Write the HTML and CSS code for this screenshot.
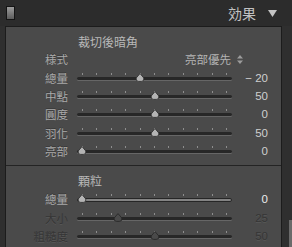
FILE: index.html
```html
<!DOCTYPE html>
<html lang="zh-Hant">
<head>
<meta charset="utf-8">
<title>効果</title>
<link rel="stylesheet" href="styles.css">
</head>
<body>
<div class="app">
  <header class="hdr">
    <span class="hdr-icon"></span>
    <span class="hdr-title">効果</span>
    <svg class="hdr-tri" width="9" height="7" viewBox="0 0 9 7"><path d="M0 0 H9 L4.5 7 Z"/></svg>
  </header>
  <div class="main">
    <div class="panel">
      <section class="sec sec-first">
        <div class="sec-title">裁切後暗角</div>
        <div class="row">
          <span class="lbl">様式</span>
          <span class="select">亮部優先<svg class="updown" width="6" height="9" viewBox="0 0 6 9"><path d="M3 0 L6 3.5 H0 Z M0 5.5 H6 L3 9 Z"/></svg></span>
        </div>
        <div class="row">
          <span class="lbl">總量</span>
          <div class="slider"><div class="ticks"><i></i><i></i><i></i><i></i><i></i><i></i><i></i><i></i><i></i><i></i><i></i></div><div class="track"></div><svg class="thumb" style="--p:40" width="10" height="9" viewBox="0 0 10 9"><path d="M5 0.6 L8.8 5 Q9.4 8.4 6.4 8.4 H3.6 Q0.6 8.4 1.2 5 Z"/></svg></div>
          <span class="val">− 20</span>
        </div>
        <div class="row">
          <span class="lbl">中點</span>
          <div class="slider"><div class="ticks"><i></i><i></i><i></i><i></i><i></i><i></i><i></i><i></i><i></i><i></i><i></i></div><div class="track"></div><svg class="thumb" style="--p:50" width="10" height="9" viewBox="0 0 10 9"><path d="M5 0.6 L8.8 5 Q9.4 8.4 6.4 8.4 H3.6 Q0.6 8.4 1.2 5 Z"/></svg></div>
          <span class="val">50</span>
        </div>
        <div class="row">
          <span class="lbl">圓度</span>
          <div class="slider"><div class="ticks"><i></i><i></i><i></i><i></i><i></i><i></i><i></i><i></i><i></i><i></i><i></i></div><div class="track"></div><svg class="thumb" style="--p:50" width="10" height="9" viewBox="0 0 10 9"><path d="M5 0.6 L8.8 5 Q9.4 8.4 6.4 8.4 H3.6 Q0.6 8.4 1.2 5 Z"/></svg></div>
          <span class="val">0</span>
        </div>
        <div class="row">
          <span class="lbl">羽化</span>
          <div class="slider"><div class="ticks"><i></i><i></i><i></i><i></i><i></i><i></i><i></i><i></i><i></i><i></i><i></i></div><div class="track"></div><svg class="thumb" style="--p:50" width="10" height="9" viewBox="0 0 10 9"><path d="M5 0.6 L8.8 5 Q9.4 8.4 6.4 8.4 H3.6 Q0.6 8.4 1.2 5 Z"/></svg></div>
          <span class="val">50</span>
        </div>
        <div class="row">
          <span class="lbl">亮部</span>
          <div class="slider"><div class="ticks"><i></i><i></i><i></i><i></i><i></i><i></i><i></i><i></i><i></i><i></i><i></i></div><div class="track"></div><svg class="thumb" style="--p:0" width="10" height="9" viewBox="0 0 10 9"><path d="M5 0.6 L8.8 5 Q9.4 8.4 6.4 8.4 H3.6 Q0.6 8.4 1.2 5 Z"/></svg></div>
          <span class="val">0</span>
        </div>
      </section>
      <section class="sec sec-second">
        <div class="sec-title">顆粒</div>
        <div class="row">
          <span class="lbl">總量</span>
          <div class="slider"><div class="ticks"><i></i><i></i><i></i><i></i><i></i><i></i><i></i><i></i><i></i><i></i><i></i></div><div class="track track-active"></div><svg class="thumb" style="--p:0" width="10" height="9" viewBox="0 0 10 9"><path d="M5 0.6 L8.8 5 Q9.4 8.4 6.4 8.4 H3.6 Q0.6 8.4 1.2 5 Z"/></svg></div>
          <span class="val val-bright">0</span>
        </div>
        <div class="row row-off">
          <span class="lbl">大小</span>
          <div class="slider"><div class="ticks"><i></i><i></i><i></i><i></i><i></i><i></i><i></i><i></i><i></i><i></i><i></i></div><div class="track"></div><svg class="thumb" style="--p:25" width="10" height="9" viewBox="0 0 10 9"><path d="M5 0.6 L8.8 5 Q9.4 8.4 6.4 8.4 H3.6 Q0.6 8.4 1.2 5 Z"/></svg></div>
          <span class="val">25</span>
        </div>
        <div class="row row-off">
          <span class="lbl">粗糙度</span>
          <div class="slider"><div class="ticks"><i></i><i></i><i></i><i></i><i></i><i></i><i></i><i></i><i></i><i></i><i></i></div><div class="track"></div><svg class="thumb" style="--p:50" width="10" height="9" viewBox="0 0 10 9"><path d="M5 0.6 L8.8 5 Q9.4 8.4 6.4 8.4 H3.6 Q0.6 8.4 1.2 5 Z"/></svg></div>
          <span class="val">50</span>
        </div>
      </section>
    </div>
    <div class="scroll"><div class="scroll-thumb"></div></div>
  </div>
</div>
</body>
</html>
```
FILE: styles.css
```css
html, body {
  margin: 0;
  padding: 0;
}
body {
  width: 292px;
  height: 247px;
  overflow: hidden;
  background: #2f2f2f;
  font-family: "Noto Sans CJK TC", "Noto Sans CJK JP", sans-serif;
}
.app {
  width: 292px;
  height: 247px;
  display: flex;
  flex-direction: column;
}
.hdr {
  height: 26px;
  flex: none;
  display: flex;
  align-items: center;
  padding: 0 15px 0 6px;
  background: #2c2c2c;
}
.hdr-icon {
  width: 9px;
  height: 14px;
  box-sizing: border-box;
  border: 1px solid #141414;
  background: linear-gradient(#9c9c9c, #5c5c5c);
}
.hdr-title {
  margin-left: auto;
  font-size: 14px;
  line-height: 16px;
  color: #c2c2c2;
}
.hdr-tri {
  margin-left: 12px;
  fill: #c4c4c4;
}
.main {
  flex: 1;
  display: flex;
}
.panel {
  margin-left: 5px;
  width: 277px;
  box-sizing: border-box;
  border: 1px solid #1c1c1c;
  border-bottom: none;
  background: #4a4a4a;
}
.scroll {
  flex: 1;
  display: flex;
  flex-direction: column;
  justify-content: flex-end;
}
.scroll-thumb {
  margin-left: 7px;
  width: 3px;
  height: 27px;
  background: #6a6a6a;
}
.sec-first {
  padding-bottom: 4.6px;
  border-bottom: 1px solid #242424;
}
.sec-title {
  padding: 9px 0 2px 72px;
  font-size: 12px;
  line-height: 12px;
  color: #b9b9b9;
}
.sec-second .sec-title {
  padding-bottom: 3px;
}
.row {
  height: 18.4px;
  display: flex;
  align-items: center;
}
.lbl {
  width: 62px;
  flex: none;
  text-align: right;
  font-size: 11.5px;
  line-height: 12px;
  color: #a9a9a9;
  text-shadow: 0 -1px 0 rgba(0, 0, 0, 0.25);
}
.select {
  margin-left: 117px;
  display: flex;
  align-items: center;
  font-size: 11.5px;
  line-height: 12px;
  color: #b4b4b4;
}
.updown {
  margin-left: 6px;
  fill: #9c9c9c;
}
.slider {
  position: relative;
  margin-left: 9px;
  width: 155px;
  height: 12px;
  flex: none;
}
.ticks {
  display: flex;
  justify-content: space-between;
  padding: 0 5px;
  margin-top: 1px;
  height: 2px;
}
.ticks i {
  width: 1px;
  height: 2px;
  background: #8e8e8e;
}
.track {
  margin-top: 2px;
  height: 3px;
  border-radius: 2px;
  background: #272727;
  box-shadow: 0 1px 0 #666;
}
.track-active {
  box-sizing: border-box;
  height: 4px;
  border: 1px solid #262626;
  background: #838383;
  box-shadow: none;
}
.thumb {
  position: absolute;
  top: 1px;
  left: calc(var(--p) * 1.45px);
}
.thumb path {
  fill: #b4b4b4;
  stroke: #2a2a2a;
  stroke-width: 0.8;
}
.val {
  width: 36px;
  flex: none;
  text-align: right;
  font-family: "Liberation Sans", "DejaVu Sans", sans-serif;
  font-size: 11.5px;
  line-height: 12px;
  color: #cfcfcf;
}
.val-bright {
  color: #ececec;
}
.row-off .lbl,
.row-off .val {
  color: #363636;
  text-shadow: 0 1px 0 rgba(255, 255, 255, 0.08);
}
.row-off .thumb path {
  fill: #4a4a4a;
  stroke: #262626;
}
```
